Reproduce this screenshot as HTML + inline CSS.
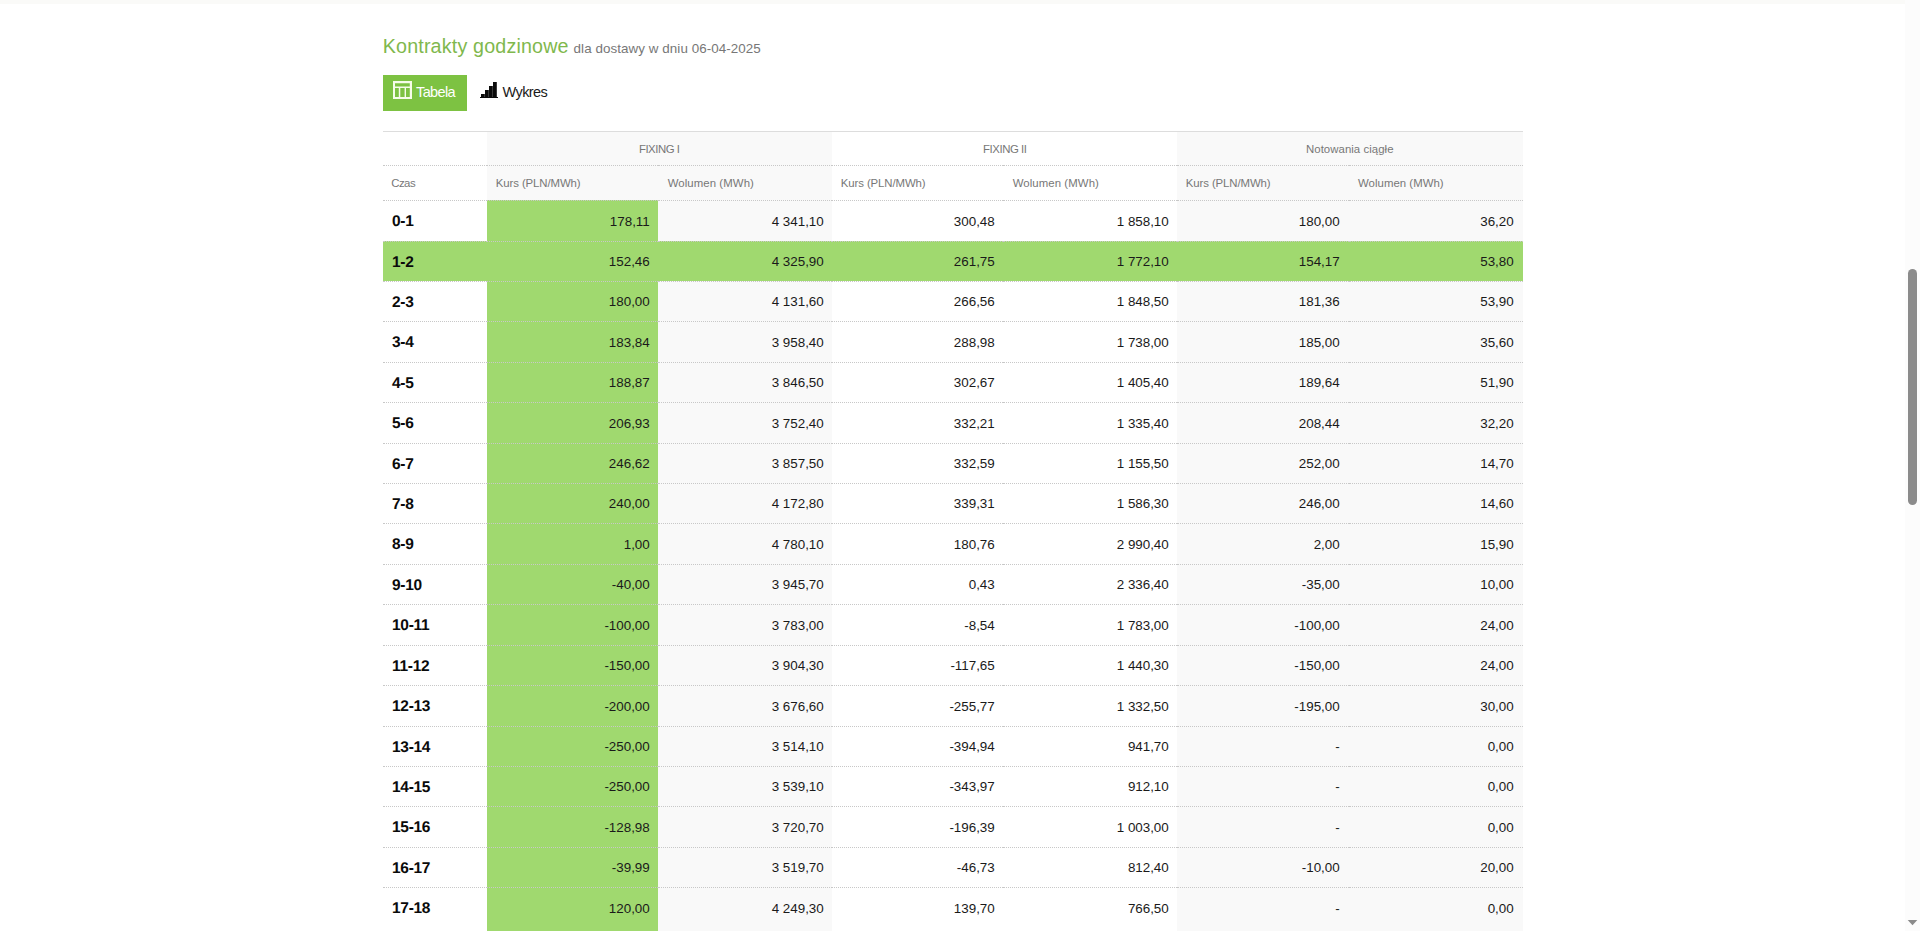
<!DOCTYPE html>
<html lang="pl"><head><meta charset="utf-8"><title>Kontrakty godzinowe</title>
<style>
html,body{margin:0;padding:0;background:#fff;}
body{width:1920px;height:931px;overflow:hidden;position:relative;font-family:"Liberation Sans",sans-serif;color:#1a1a1a;}
.topband{position:absolute;left:0;top:0;width:1905px;height:4px;background:#fafaf8;}
.sb{position:absolute;left:1905px;top:0;width:15px;height:931px;background:#fcfcfc;}
.sb .thumb{position:absolute;left:3px;top:269px;width:9px;height:236px;border-radius:4.5px;background:#8b8b8b;}
.sb svg{position:absolute;left:0;top:915px;}
.wrap{position:absolute;left:383px;top:0;width:1140px;}
h2{position:absolute;left:0;top:32px;margin:0;font-weight:normal;font-size:19.7px;line-height:28px;color:#7fb84d;white-space:nowrap;}
.sub{position:absolute;left:191px;top:35px;font-size:13.4px;line-height:28px;color:#777;white-space:nowrap;}
.btn{position:absolute;top:75px;height:36px;font-size:14.5px;line-height:36px;white-space:nowrap;}
.btn.on{left:0;width:84px;background:#7dc242;color:#fff;}
.btn.off{left:0;width:84px;color:#1a1a1a;}
.btn svg{position:absolute;}
.btn span{position:absolute;top:-1px;}
.btn.on span{left:33px;}
.btn.off span{left:120px;}
table{position:absolute;left:0;top:131px;width:1140px;border-collapse:separate;border-spacing:0;table-layout:fixed;}
th,td{padding:9px 8px;border-top:1px dotted #c8c8c8;overflow:hidden;white-space:nowrap;}
th{font-size:11.4px;font-weight:normal;color:#777;text-align:left;}
th span{display:inline-block;}
tr.h1 th{border-top:1px solid #ddd;text-align:center;line-height:15.4px;padding-top:10px;padding-bottom:8px;}
tr.h2 th{line-height:15.7px;padding:10px 0 8px 9px;}
th.g,td.g{background:#f9f9f9;}
td{font-size:13.4px;line-height:21.42px;text-align:right;letter-spacing:-0.02px;padding:9.4px 8.3px 8.6px 0;}
td.r2{padding-right:9.4px;}
td.t{font-size:15.5px;font-weight:bold;text-align:left;color:#0a0a0a;letter-spacing:-0.3px;padding:9px 0 9px 8.8px;}
td.k1{background:#a0d96f;}
tr.sel td{background:#a0d96f;}
tbody tr:last-child td{padding-bottom:30px;}
td.t span{display:inline-block;transform:skewX(0.05deg);transform-origin:0 100%;}

</style></head><body>
<div class="topband"></div>
<div class="sb"><div class="thumb"></div><svg width="15" height="14" viewBox="0 0 15 14"><path fill="#8b8b8b" d="M2.7 5h9.6L7.5 10.3z"/></svg></div>
<div class="wrap">
<h2 style="letter-spacing:0.172px;margin-left:-0.30px">Kontrakty godzinowe</h2>
<div class="sub" style="letter-spacing:0.064px;margin-left:-0.40px">dla dostawy w dniu 06-04-2025</div>
<div class="btn on"><svg width="19" height="18" viewBox="0 0 19 18" style="left:10px;top:6px"><path fill="#f6fce9" fill-rule="evenodd" d="M0 0h19v18H0z M2 2.2h14.8v3.2H2z M2 7h3.8v9H2z M7.3 7h4.3v9H7.3z M13 7h3.8v9H13z"/></svg><span style="letter-spacing:-0.620px;margin-left:-0.00px">Tabela</span></div>
<div class="btn off"><svg width="20" height="18" viewBox="0 0 20 18" style="left:96px;top:5px"><path fill="#0b0b0b" d="M1 17h18v1.2H1z M2 14h3.8v3H2z M6 10h3.8v7H6z M10 6h3.8v11H10z M14 2h3.8v15H14z"/></svg><span style="letter-spacing:-0.620px;margin-left:-0.40px">Wykres</span></div>
<table>
<colgroup><col style="width:104px"><col style="width:171px"><col style="width:174px"><col style="width:171px"><col style="width:174px"><col style="width:172px"><col style="width:174px"></colgroup>
<thead>
<tr class="h1"><th></th><th colspan="2" class="g"><span style="letter-spacing:-0.456px;margin-left:-0.60px">FIXING I</span></th><th colspan="2"><span style="letter-spacing:-0.464px;margin-left:0.50px">FIXING II</span></th><th colspan="2" class="g"><span style="letter-spacing:0.052px;margin-left:-0.50px">Notowania ciągłe</span></th></tr>
<tr class="h2"><th><span style="letter-spacing:-0.500px;margin-left:-0.80px">Czas</span></th><th class="g"><span style="letter-spacing:-0.101px;margin-left:-0.20px">Kurs (PLN/MWh)</span></th><th class="g"><span style="letter-spacing:0.077px;margin-left:0.70px">Wolumen (MWh)</span></th><th><span style="letter-spacing:-0.101px;margin-left:-0.20px">Kurs (PLN/MWh)</span></th><th><span style="letter-spacing:0.077px;margin-left:0.70px">Wolumen (MWh)</span></th><th class="g"><span style="letter-spacing:-0.101px;margin-left:-0.20px">Kurs (PLN/MWh)</span></th><th class="g"><span style="letter-spacing:0.034px;margin-left:0.00px">Wolumen (MWh)</span></th></tr>
</thead>

<tbody>
<tr><td class="t"><span>0-1</span></td><td class="k1">178,11</td><td class="g">4 341,10</td><td class="w">300,48</td><td class="w">1 858,10</td><td class="g r2">180,00</td><td class="g r2">36,20</td></tr>
<tr class="sel"><td class="t"><span>1-2</span></td><td class="k1">152,46</td><td class="g">4 325,90</td><td class="w">261,75</td><td class="w">1 772,10</td><td class="g r2">154,17</td><td class="g r2">53,80</td></tr>
<tr><td class="t"><span>2-3</span></td><td class="k1">180,00</td><td class="g">4 131,60</td><td class="w">266,56</td><td class="w">1 848,50</td><td class="g r2">181,36</td><td class="g r2">53,90</td></tr>
<tr><td class="t"><span>3-4</span></td><td class="k1">183,84</td><td class="g">3 958,40</td><td class="w">288,98</td><td class="w">1 738,00</td><td class="g r2">185,00</td><td class="g r2">35,60</td></tr>
<tr><td class="t"><span>4-5</span></td><td class="k1">188,87</td><td class="g">3 846,50</td><td class="w">302,67</td><td class="w">1 405,40</td><td class="g r2">189,64</td><td class="g r2">51,90</td></tr>
<tr><td class="t"><span>5-6</span></td><td class="k1">206,93</td><td class="g">3 752,40</td><td class="w">332,21</td><td class="w">1 335,40</td><td class="g r2">208,44</td><td class="g r2">32,20</td></tr>
<tr><td class="t"><span>6-7</span></td><td class="k1">246,62</td><td class="g">3 857,50</td><td class="w">332,59</td><td class="w">1 155,50</td><td class="g r2">252,00</td><td class="g r2">14,70</td></tr>
<tr><td class="t"><span>7-8</span></td><td class="k1">240,00</td><td class="g">4 172,80</td><td class="w">339,31</td><td class="w">1 586,30</td><td class="g r2">246,00</td><td class="g r2">14,60</td></tr>
<tr><td class="t"><span>8-9</span></td><td class="k1">1,00</td><td class="g">4 780,10</td><td class="w">180,76</td><td class="w">2 990,40</td><td class="g r2">2,00</td><td class="g r2">15,90</td></tr>
<tr><td class="t"><span>9-10</span></td><td class="k1">-40,00</td><td class="g">3 945,70</td><td class="w">0,43</td><td class="w">2 336,40</td><td class="g r2">-35,00</td><td class="g r2">10,00</td></tr>
<tr><td class="t"><span>10-11</span></td><td class="k1">-100,00</td><td class="g">3 783,00</td><td class="w">-8,54</td><td class="w">1 783,00</td><td class="g r2">-100,00</td><td class="g r2">24,00</td></tr>
<tr><td class="t"><span>11-12</span></td><td class="k1">-150,00</td><td class="g">3 904,30</td><td class="w">-117,65</td><td class="w">1 440,30</td><td class="g r2">-150,00</td><td class="g r2">24,00</td></tr>
<tr><td class="t"><span>12-13</span></td><td class="k1">-200,00</td><td class="g">3 676,60</td><td class="w">-255,77</td><td class="w">1 332,50</td><td class="g r2">-195,00</td><td class="g r2">30,00</td></tr>
<tr><td class="t"><span>13-14</span></td><td class="k1">-250,00</td><td class="g">3 514,10</td><td class="w">-394,94</td><td class="w">941,70</td><td class="g r2">-</td><td class="g r2">0,00</td></tr>
<tr><td class="t"><span>14-15</span></td><td class="k1">-250,00</td><td class="g">3 539,10</td><td class="w">-343,97</td><td class="w">912,10</td><td class="g r2">-</td><td class="g r2">0,00</td></tr>
<tr><td class="t"><span>15-16</span></td><td class="k1">-128,98</td><td class="g">3 720,70</td><td class="w">-196,39</td><td class="w">1 003,00</td><td class="g r2">-</td><td class="g r2">0,00</td></tr>
<tr><td class="t"><span>16-17</span></td><td class="k1">-39,99</td><td class="g">3 519,70</td><td class="w">-46,73</td><td class="w">812,40</td><td class="g r2">-10,00</td><td class="g r2">20,00</td></tr>
<tr><td class="t"><span>17-18</span></td><td class="k1">120,00</td><td class="g">4 249,30</td><td class="w">139,70</td><td class="w">766,50</td><td class="g r2">-</td><td class="g r2">0,00</td></tr>
</tbody></table>
</div>
</body></html>
